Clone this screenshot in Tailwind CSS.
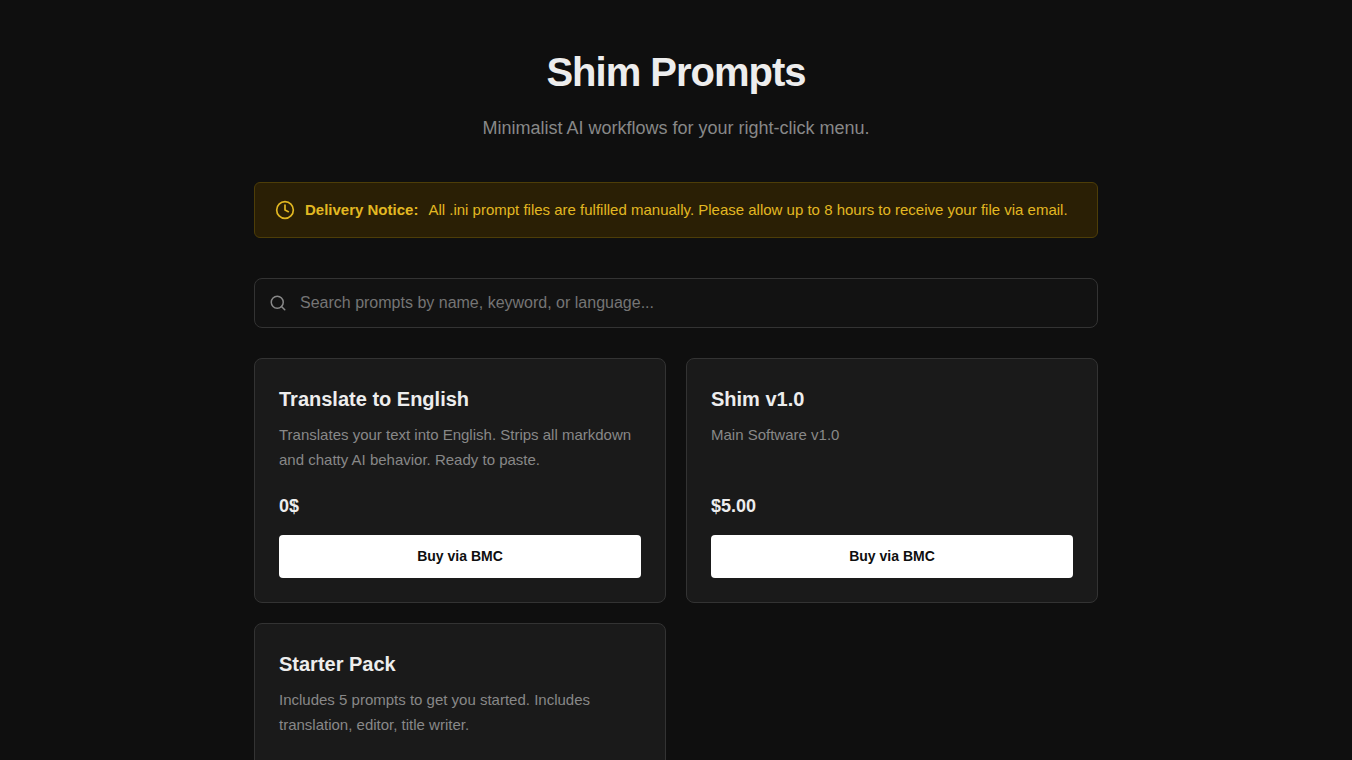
<!DOCTYPE html>
<html lang="en">
<head>
    <meta charset="UTF-8">
    <meta name="viewport" content="width=device-width, initial-scale=1.0">
    <title>Shim Prompts</title>
    <script src="https://cdn.jsdelivr.net/npm/@tailwindcss/browser@4"></script>
    <style>
        body {
            font-family: 'Liberation Sans', Arial, sans-serif;
        }
    </style>
</head>
<body class="min-h-screen bg-[#0f0f0f] text-[#ededed]">

    <div class="w-full max-w-[884px] mx-auto px-5 py-10">

        <!-- Header -->
        <header class="mb-10 text-center">
            <h1 class="text-[40px] leading-16 font-bold tracking-tight">Shim Prompts</h1>
            <p class="mt-2.5 text-lg leading-7 text-[#888888]">Minimalist AI workflows for your right-click menu.</p>
        </header>

        <!-- Delivery notice -->
        <div class="flex items-center gap-2.5 px-5 py-[15px] mb-10 text-[15px] leading-6 text-[#e2b822] bg-[#2a1f05] border border-[#4d3d08] rounded-md">
            <svg class="size-5 shrink-0" viewBox="0 0 24 24" fill="none" stroke="currentColor" stroke-width="2" stroke-linecap="round" stroke-linejoin="round" aria-hidden="true">
                <circle cx="12" cy="12" r="10"></circle>
                <polyline points="12 6 12 12 16 14"></polyline>
            </svg>
            <strong class="shrink-0">Delivery Notice:</strong>
            <span>All .ini prompt files are fulfilled manually. Please allow up to 8 hours to receive your file via email.</span>
        </div>

        <!-- Search -->
        <label for="search" class="flex items-center gap-[13px] px-3.5 mb-[30px] bg-[#121212] border border-[#333333] rounded-lg focus-within:border-[#666666]">
            <svg class="size-[18px] shrink-0 text-[#888888]" viewBox="0 0 24 24" fill="none" stroke="currentColor" stroke-width="2" stroke-linecap="round" stroke-linejoin="round" aria-hidden="true">
                <circle cx="11" cy="11" r="8"></circle>
                <line x1="21" y1="21" x2="16.65" y2="16.65"></line>
            </svg>
            <input id="search" type="text" aria-label="Search prompts" placeholder="Search prompts by name, keyword, or language..."
                class="w-full h-12 text-base text-[#ededed] bg-transparent placeholder:text-[#757575] focus:outline-none">
        </label>

        <!-- Products -->
        <main class="grid grid-cols-1 md:grid-cols-2 gap-5">
            <article class="flex flex-col p-6 bg-[#1a1a1a] border border-[#333333] rounded-lg">
                <h2 class="mb-[7px] text-xl leading-8 font-bold">Translate to English</h2>
                <p class="mb-[21px] text-[15px] leading-[25px] text-[#888888] grow">Translates your text into English. Strips all markdown and chatty AI behavior. Ready to paste.</p>
                <div class="mb-[15px] text-lg leading-[27px] font-bold">0$</div>
                <button type="button" class="w-full h-[43px] pb-0.5 text-sm font-bold text-[#0f0f0f] bg-white rounded-sm hover:bg-gray-200">Buy via BMC</button>
            </article>

            <article class="flex flex-col p-6 bg-[#1a1a1a] border border-[#333333] rounded-lg">
                <h2 class="mb-[7px] text-xl leading-8 font-bold">Shim v1.0</h2>
                <p class="mb-[21px] text-[15px] leading-[25px] text-[#888888] grow">Main Software v1.0</p>
                <div class="mb-[15px] text-lg leading-[27px] font-bold">$5.00</div>
                <button type="button" class="w-full h-[43px] pb-0.5 text-sm font-bold text-[#0f0f0f] bg-white rounded-sm hover:bg-gray-200">Buy via BMC</button>
            </article>

            <article class="flex flex-col p-6 bg-[#1a1a1a] border border-[#333333] rounded-lg">
                <h2 class="mb-[7px] text-xl leading-8 font-bold">Starter Pack</h2>
                <p class="mb-[21px] text-[15px] leading-[25px] text-[#888888] grow">Includes 5 prompts to get you started. Includes translation, editor, title writer.</p>
                <div class="mb-[15px] text-lg leading-[27px] font-bold">$5.00</div>
                <button type="button" class="w-full h-[43px] pb-0.5 text-sm font-bold text-[#0f0f0f] bg-white rounded-sm hover:bg-gray-200">Buy via BMC</button>
            </article>
        </main>
    </div>

</body>
</html>
